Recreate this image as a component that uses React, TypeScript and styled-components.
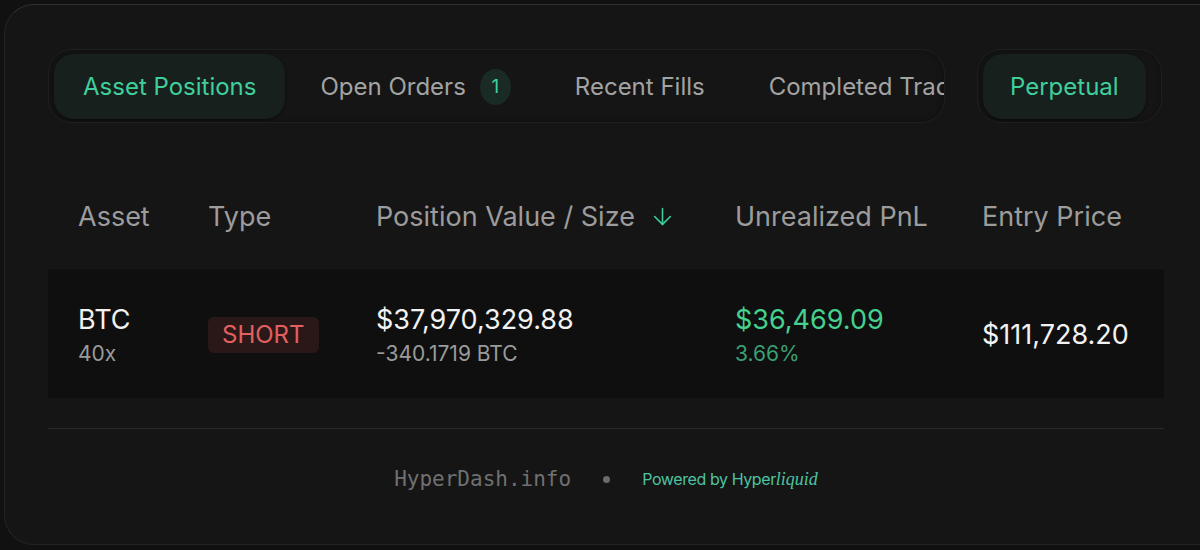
import React from "react";
import styled, { createGlobalStyle } from "styled-components";
import { ArrowDown } from "lucide-react";

const GlobalStyle = createGlobalStyle`
  html, body {
    margin: 0;
    padding: 0;
    background: #111111;
  }
  body {
    font-family: Inter, "Noto Sans", "Liberation Sans", sans-serif;
    -webkit-font-smoothing: antialiased;
  }
`;

const tabs = [
  { label: "Asset Positions", active: true },
  { label: "Open Orders", badge: 1 },
  { label: "Recent Fills" },
  { label: "Completed Trades" },
];

const App = () => {
  return (
    <Page>
      <GlobalStyle />
      <Card>
        <Content>
          <TopBar>
            <TabGroup>
              {tabs.map((t) => (
                <Tab key={t.label} $active={!!t.active}>
                  {t.label}
                  {t.badge ? <Badge>{t.badge}</Badge> : null}
                </Tab>
              ))}
            </TabGroup>
            <MarketGroup>
              <Tab $active $pad={27}>
                Perpetual
              </Tab>
            </MarketGroup>
          </TopBar>

          <HeaderRow>
            <HeadCell>Asset</HeadCell>
            <HeadCell>Type</HeadCell>
            <HeadCell>
              Position Value / Size
              <SortIcon>
                <ArrowDown size={27} strokeWidth={1.4} />
              </SortIcon>
            </HeadCell>
            <HeadCell>Unrealized PnL</HeadCell>
            <HeadCell>Entry Price</HeadCell>
          </HeaderRow>

          <DataRow>
            <Stack>
              <Main>BTC</Main>
              <Sub>40x</Sub>
            </Stack>
            <div>
              <SideTag>SHORT</SideTag>
            </div>
            <Stack>
              <Main>$37,970,329.88</Main>
              <Sub>-340.1719 BTC</Sub>
            </Stack>
            <Stack>
              <Main $tone="gain">$36,469.09</Main>
              <Sub $tone="gain">3.66%</Sub>
            </Stack>
            <Main>$111,728.20</Main>
          </DataRow>

          <Divider />

          <Footer>
            <SiteName>HyperDash.info</SiteName>
            <Dot />
            <Powered>
              Powered by Hyper<em>liquid</em>
            </Powered>
          </Footer>
        </Content>
      </Card>
    </Page>
  );
};

export default App;

const Page = styled.div`
  width: 1200px;
  height: 550px;
  overflow: hidden;
  padding: 4px 0 0 4px;
  box-sizing: border-box;
`;

const Card = styled.div`
  width: 1240px;
  height: 541px;
  box-sizing: border-box;
  background: #151515;
  border: 1px solid #242424;
  border-top-color: #2e2e2e;
  border-radius: 30px;
  padding: 44px 0 0 43px;
`;

const Content = styled.div`
  width: 1116px;
  display: flex;
  flex-direction: column;
`;

const TopBar = styled.div`
  display: flex;
  gap: 32px;
  height: 74px;
`;

const TabGroup = styled.div`
  width: 897px;
  box-sizing: border-box;
  display: flex;
  gap: 6px;
  padding: 4px 5px 3px;
  border: 1px solid #1f1f1f;
  border-radius: 24px;
  background: #151515;
  box-shadow: inset 0 0 6px rgba(0, 0, 0, 0.35);
  overflow: hidden;
`;

const MarketGroup = styled.div`
  width: 185px;
  box-sizing: border-box;
  display: flex;
  padding: 4px 16px 3px 5px;
  border: 1px solid #1f1f1f;
  border-radius: 24px;
  background: #151515;
  box-shadow: inset 0 0 6px rgba(0, 0, 0, 0.35);
`;

const Tab = styled.div<{ $active: boolean; $pad?: number }>`
  flex-shrink: 0;
  display: flex;
  align-items: center;
  gap: 14px;
  padding: 0 ${({ $pad }) => $pad ?? 29}px;
  border-radius: 20px;
  font-size: 24px;
  white-space: nowrap;
  color: ${({ $active }) => ($active ? "#3fcf9c" : "#a3a3a3")};
  background: ${({ $active }) => ($active ? "#17201d" : "transparent")};
  box-shadow: ${({ $active }) =>
    $active ? "0 1px 3px rgba(0, 0, 0, 0.5)" : "none"};
`;

const Badge = styled.span`
  width: 31px;
  height: 36px;
  border-radius: 50%;
  background: #1a2a24;
  color: #3fcf9c;
  font-size: 19px;
  display: flex;
  align-items: center;
  justify-content: center;
`;

const Columns = styled.div`
  display: grid;
  grid-template-columns: 130px 168px 359px 247px 1fr;
  align-items: center;
  padding-left: 30px;
`;

const HeaderRow = styled(Columns)`
  margin-top: 46px;
  height: 100px;
  padding-bottom: 6px;
  box-sizing: border-box;
`;

const HeadCell = styled.div`
  display: flex;
  align-items: center;
  font-size: 27px;
  color: #9c9c9c;
  white-space: nowrap;
`;

const SortIcon = styled.span`
  display: flex;
  margin-left: 14px;
  color: #3fcf9c;
`;

const DataRow = styled(Columns)`
  height: 129px;
  background: #0f0f0f;
  padding-top: 2px;
  box-sizing: border-box;
`;

const Stack = styled.div`
  display: flex;
  flex-direction: column;
  gap: 7px;
`;

const Main = styled.div<{ $tone?: "gain" }>`
  font-size: 27px;
  line-height: 31px;
  color: ${({ $tone }) => ($tone === "gain" ? "#45d08e" : "#f2f2f2")};
  white-space: nowrap;
`;

const Sub = styled.div<{ $tone?: "gain" }>`
  font-size: 21px;
  line-height: 24px;
  color: ${({ $tone }) => ($tone === "gain" ? "#3a9f72" : "#9a9a9a")};
  white-space: nowrap;
`;

const SideTag = styled.span`
  display: inline-flex;
  align-items: center;
  height: 36px;
  padding: 0 14px;
  border-radius: 6px;
  background: #2a1818;
  color: #e2605f;
  font-size: 24px;
`;

const Divider = styled.div`
  margin-top: 30px;
  height: 1px;
  background: #2b2b2b;
`;

const Footer = styled.div`
  height: 100px;
  display: flex;
  align-items: center;
  justify-content: center;
  gap: 32px;
`;

const SiteName = styled.span`
  font-family: "DejaVu Sans Mono", "Liberation Mono", monospace;
  font-size: 21px;
  color: #707070;
`;

const Dot = styled.span`
  width: 7px;
  height: 7px;
  border-radius: 50%;
  background: #6a6a6a;
`;

const Powered = styled.span`
  font-size: 16px;
  color: #4ec3a0;
  letter-spacing: -0.4px;

  em {
    font-family: "Liberation Serif", serif;
    font-size: 18px;
    letter-spacing: 0;
  }
`;
